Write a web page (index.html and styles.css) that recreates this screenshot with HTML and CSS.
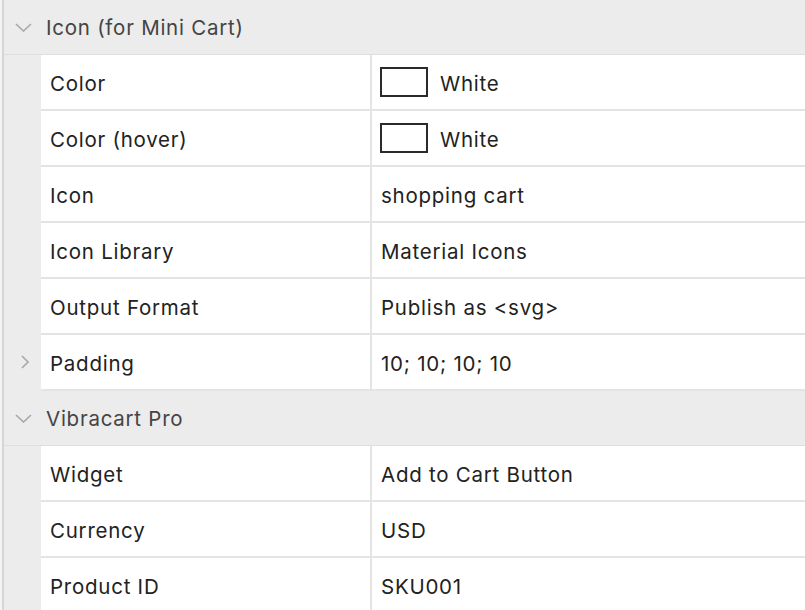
FILE: index.html
```html
<!DOCTYPE html>
<html>
<head>
<meta charset="utf-8">
<link rel="stylesheet" href="styles.css">
</head>
<body>
<div class="panel">
  <div class="group">
    <svg class="chev" width="17" height="9" viewBox="0 0 17 9"><path d="M1 1 L8.5 8 L16 1" fill="none" stroke="#aaaaaa" stroke-width="1.7"/></svg>
    <span>Icon (for Mini Cart)</span>
  </div>
  <div class="row"><div class="gutter"></div><div class="label">Color</div><div class="value"><span class="swatch"></span>White</div></div>
  <div class="row"><div class="gutter"></div><div class="label">Color (hover)</div><div class="value"><span class="swatch"></span>White</div></div>
  <div class="row"><div class="gutter"></div><div class="label">Icon</div><div class="value">shopping cart</div></div>
  <div class="row"><div class="gutter"></div><div class="label">Icon Library</div><div class="value">Material Icons</div></div>
  <div class="row"><div class="gutter"></div><div class="label">Output Format</div><div class="value">Publish as &lt;svg&gt;</div></div>
  <div class="row"><div class="gutter"><svg class="chev-r" width="8" height="14" viewBox="0 0 8 14"><path d="M1 1 L7 7 L1 13" fill="none" stroke="#aaaaaa" stroke-width="1.7"/></svg></div><div class="label">Padding</div><div class="value">10; 10; 10; 10</div></div>
  <div class="group">
    <svg class="chev" width="17" height="9" viewBox="0 0 17 9"><path d="M1 1 L8.5 8 L16 1" fill="none" stroke="#aaaaaa" stroke-width="1.7"/></svg>
    <span>Vibracart Pro</span>
  </div>
  <div class="row"><div class="gutter"></div><div class="label">Widget</div><div class="value">Add to Cart Button</div></div>
  <div class="row"><div class="gutter"></div><div class="label">Currency</div><div class="value">USD</div></div>
  <div class="row"><div class="gutter"></div><div class="label">Product ID</div><div class="value">SKU001</div></div>
</div>
</body>
</html>
```
FILE: styles.css
```css
html, body {
  margin: 0;
  padding: 0;
  background: #f4f4f4;
}
body {
  font-family: Inter, "Noto Sans", sans-serif;
  font-size: 20.5px;
  letter-spacing: 0.75px;
  color: #222;
  overflow: hidden;
}
.panel {
  margin-left: 2px;
  border-left: 2px solid #d6d6d6;
  background: #ececec;
  min-height: 610px;
}
.group {
  display: flex;
  align-items: center;
  color: #444;
  border-bottom: 1px solid #dedede;
  box-sizing: border-box;
  height: 55px;
  padding-top: 1px;
}
.group .chev {
  margin-left: 11px;
  margin-right: 14px;
  margin-top: -1px;
}
.row {
  display: flex;
  height: 56px;
}
.gutter {
  width: 37px;
  flex: none;
  display: flex;
  align-items: center;
  justify-content: flex-start;
}
.chev-r {
  margin-left: 17px;
  margin-top: -3px;
}
.label, .value {
  background: #fff;
  border-bottom: 2px solid #e4e4e4;
  display: flex;
  align-items: center;
  box-sizing: border-box;
  padding-top: 2px;
}
.label {
  width: 331px;
  padding-left: 9px;
  border-right: 2px solid #e4e4e4;
}
.value {
  flex: 1;
  padding-left: 9px;
}
.swatch {
  width: 44px;
  height: 26px;
  border: 2px solid #2a2a2a;
  margin-right: 12px;
  margin-left: -1px;
  margin-top: -2px;
  background: #fff;
}
```
